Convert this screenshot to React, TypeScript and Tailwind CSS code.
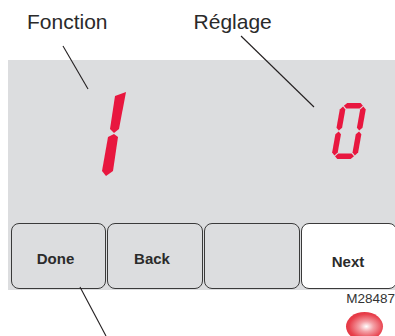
import React from 'react';

const RED = '#e8173f';

// upright seven-segment "0", slanted with a skew
function DigitZero() {
  const H = 56;
  const k = Math.tan((10 * Math.PI) / 180);
  const segs = [
    '3.5,2.8 6.3,0 19.7,0 22.5,2.8 19.7,5.6 6.3,5.6',
    '2.8,3.6 5.6,6.4 5.6,24.8 2.8,27.4 0,24.8 0,6.4',
    '23.2,3.6 26,6.4 26,24.8 23.2,27.4 20.4,24.8 20.4,6.4',
    '2.8,28.6 5.6,31.2 5.6,49.6 2.8,52.4 0,49.6 0,31.2',
    '23.2,28.6 26,31.2 26,49.6 23.2,52.4 20.4,49.6 20.4,31.2',
    '3.5,53.2 6.3,50.4 19.7,50.4 22.5,53.2 19.7,56 6.3,56',
  ];
  return (
    <svg width={36} height={58} viewBox="0 -1 36 58" className="block">
      <g transform={`translate(${k * H},0) skewX(-10)`} fill={RED}>
        {segs.map((p, i) => (
          <polygon key={i} points={p} />
        ))}
      </g>
    </svg>
  );
}

function DigitOne() {
  return (
    <svg width={28} height={88} viewBox="0 0 28 88" className="block">
      <g fill={RED}>
        <polygon points="26,2 19,39 14,43 10,39 15,6" />
        <polygon points="14,44 18,47 13,81 6,86 2,81 8,47" />
      </g>
    </svg>
  );
}

function Key({ label, white, next }: { label?: string; white?: boolean; next?: boolean }) {
  return (
    <div
      className={`h-[66px] w-[96px] shrink-0 rounded-[8px] border border-[#3a3a3a] flex items-center justify-center text-[15px] font-bold leading-none text-[#2b2b2b] ${
        white ? 'bg-white' : 'bg-[#dcdddf]'
      } ${next ? 'pt-[11px] pr-[2px]' : 'pt-[4px] pr-[6px]'}`}
    >
      {label}
    </div>
  );
}

export default function App() {
  return (
    <div
      className="relative w-[395px] h-[336px] bg-white overflow-hidden"
      style={{ fontFamily: '"Liberation Sans", Arial, sans-serif' }}
    >
      <div className="h-[60px] flex pt-[11px] text-[21px] leading-none text-[#2a2a2a]">
        <span className="ml-[27px]">Fonction</span>
        <span className="ml-[86px]">Réglage</span>
      </div>

      <div className="ml-[8px] h-[230px] bg-[#dcdddf] flex flex-col overflow-hidden">
        <div className="h-[163px] flex items-start">
          <div className="ml-[92px] mt-[30px]">
            <DigitOne />
          </div>
          <div className="ml-[203px] mt-[42px]">
            <DigitZero />
          </div>
        </div>
        <div className="flex gap-[1px] pl-[3px]">
          <div className="h-[66px] w-[95px] shrink-0 rounded-[8px] border border-[#3a3a3a] bg-[#dcdddf] flex items-center justify-center text-[15px] font-bold leading-none text-[#2b2b2b] pt-[4px] pr-[6px]">
            Done
          </div>
          <Key label="Back" />
          <Key />
          <Key label="Next" white next />
        </div>
      </div>

      <div className="flex flex-col items-end">
        <span className="mt-[2px] text-[13.5px] leading-none text-[#333]">M28487</span>
        <div className="mt-[6px] mr-[12px] w-[37px] h-[29px] rounded-[50%] bg-[radial-gradient(ellipse_at_55%_50%,#ffffff_0%,#f4a0a6_25%,#e8404c_60%,#dc1e2c_100%)]" />
      </div>

      <svg className="absolute inset-0 pointer-events-none" width={395} height={336}>
        <g stroke="#231f20" strokeWidth={1.1}>
          <line x1={63} y1={46} x2={88} y2={89} />
          <line x1={241} y1={36} x2={314} y2={107} />
          <line x1={80} y1={287} x2={106} y2={336} />
        </g>
      </svg>
    </div>
  );
}
